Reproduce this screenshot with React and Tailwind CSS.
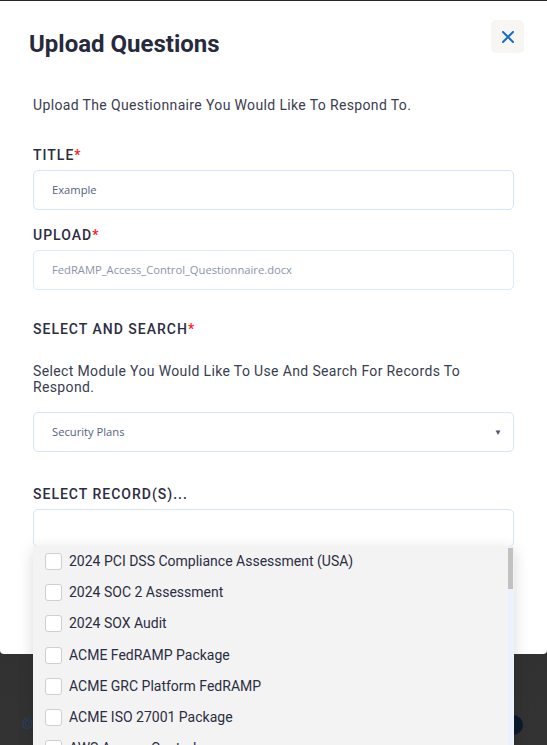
import React from "react";

const items = [
  "2024 PCI DSS Compliance Assessment (USA)",
  "2024 SOC 2 Assessment",
  "2024 SOX Audit",
  "ACME FedRAMP Package",
  "ACME GRC Platform FedRAMP",
  "ACME ISO 27001 Package",
  "AWS Access Control",
];

function Label({ children, req }) {
  return (
    <div className="text-[14px] font-medium tracking-[1px] text-[#2b2d42] leading-[18px]">
      {children}
      {req && <span className="text-[#ff1a1a]">*</span>}
    </div>
  );
}

export default function App() {
  return (
    <div
      className="relative h-[745px] w-[547px] overflow-hidden bg-gradient-to-b from-[#262626] to-[#333333]"
      style={{ fontFamily: "Roboto, 'Liberation Sans', sans-serif" }}
    >
      <div className="mt-px bg-white rounded-b-[4px] h-[653px] px-[33px] relative">
        <div className="flex items-start justify-between pt-[18px]">
          <h1 className="ml-[-4px] mt-[11px] text-[24px] font-bold text-[#272a3d] leading-[28px]">
            Upload Questions
          </h1>
          <button className="mt-px mr-[-10px] w-[33px] h-[33px] rounded-[5px] bg-[#f7f6f3] flex items-center justify-center">
            <svg width="12" height="12" viewBox="0 0 12 12">
              <path d="M1 1L11 11M11 1L1 11" stroke="#1a6fc4" strokeWidth="2" strokeLinecap="round" />
            </svg>
          </button>
        </div>
        <p className="mt-[38px] text-[14px] tracking-[0.36px] text-[#3a3d50] leading-[18px]">
          Upload The Questionnaire You Would Like To Respond To.
        </p>
        <div className="mt-[32px]">
          <Label req>TITLE</Label>
          <div
            className="mt-[6px] h-[40px] rounded-[5px] border border-[#d3e6fb] flex items-center px-[18px] text-[11.2px] text-[#56627e]"
            style={{ fontFamily: "'Open Sans', sans-serif" }}
          >
            Example
          </div>
        </div>
        <div className="mt-[16px]">
          <Label req>UPLOAD</Label>
          <div
            className="mt-[6px] h-[40px] rounded-[5px] border border-[#dcebfb] flex items-center px-[18px] text-[11.2px] text-[#8b94a8]"
            style={{ fontFamily: "'Open Sans', sans-serif" }}
          >
            FedRAMP_Access_Control_Questionnaire.docx
          </div>
        </div>
        <div className="mt-[30px]">
          <Label req>SELECT AND SEARCH</Label>
          <p className="mt-[25px] text-[14px] tracking-[0.36px] text-[#3a3d50] leading-[16px]">
            Select Module You Would Like To Use And Search For Records To Respond.
          </p>
          <div
            className="mt-[17px] h-[40px] rounded-[5px] border border-[#d3e6fb] flex items-center justify-between pl-[18px] pr-[11px] text-[11.2px] text-[#56627e]"
            style={{ fontFamily: "'Open Sans', sans-serif" }}
          >
            <span>Security Plans</span>
            <span className="text-[8px] text-[#4a5672]">▼</span>
          </div>
        </div>
        <div className="mt-[33px]">
          <Label>SELECT RECORD(S)...</Label>
          <div className="relative mt-[6px]">
            <div className="h-[38px] rounded-[5px] border border-[#d3e6fb]" />
            <div className="absolute left-0 right-0 top-[37px] h-[210px] bg-[#f3f3f3] rounded-b-[5px] shadow-[0_4px_16px_rgba(0,0,0,0.15)] z-10 flex overflow-hidden">
              <div className="flex-1 pl-[12px] pt-0">
                {items.map((t) => (
                  <div key={t} className="flex items-center h-[31.2px] gap-[7px]">
                    <div className="w-[17px] h-[17px] rounded-[3px] bg-white border border-[#cfcfcf]" />
                    <span className="text-[14px] text-[#2b2d42]">{t}</span>
                  </div>
                ))}
              </div>
              <div className="w-[5px] mr-[1px] bg-[#eaf3fd] pt-[2px]">
                <div className="h-[41px] w-[5px] bg-[#c1c1c1]" />
              </div>
            </div>
          </div>
        </div>
      </div>
      <div className="flex items-center justify-between px-[22px] pt-[60px]">
        <span className="text-[14px] text-[#24406a]">© 2024</span>
        <div className="w-[20px] h-[20px] rounded-full bg-[#0b1a2e] mr-[2px]" />
      </div>
    </div>
  );
}
